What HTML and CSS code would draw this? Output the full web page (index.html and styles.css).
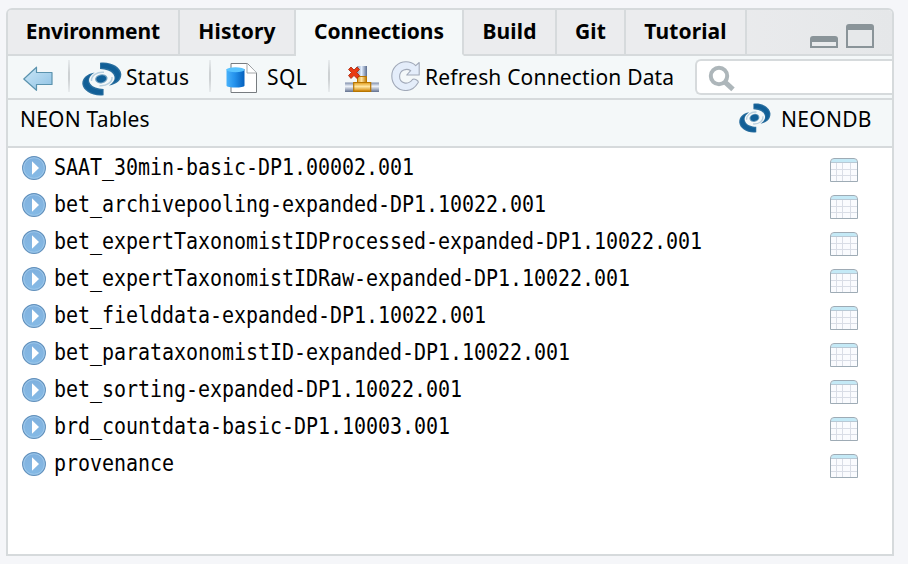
FILE: index.html
```
<!DOCTYPE html>
<html lang="en">
<head>
<meta charset="utf-8">
<title>Connections</title>
<link rel="stylesheet" href="styles.css">
</head>
<body>
<svg class="defs" aria-hidden="true">
  <defs>
    <linearGradient id="playfill" x1="0" y1="0" x2="0" y2="1"><stop offset="0" stop-color="#7db0df"/><stop offset=".35" stop-color="#83b4e0"/><stop offset="1" stop-color="#84bae6"/></linearGradient>
    <linearGradient id="arrowfill" x1="0" y1="0" x2="1" y2="1"><stop offset="0" stop-color="#cbe7f7"/><stop offset="1" stop-color="#8fc2e4"/></linearGradient>
    <linearGradient id="dbfill"><stop offset="0" stop-color="#48b2fb"/><stop offset=".45" stop-color="#2492ec"/><stop offset="1" stop-color="#0560bd"/></linearGradient>
    <linearGradient id="pipe" x1="0" y1="0" x2="0" y2="1"><stop offset="0" stop-color="#7c8ba8"/><stop offset=".4" stop-color="#eff4fb"/><stop offset="1" stop-color="#61708e"/></linearGradient>
    <linearGradient id="vpipe"><stop offset="0" stop-color="#8896ae"/><stop offset=".45" stop-color="#e3efff"/><stop offset="1" stop-color="#596b8d"/></linearGradient>
    <linearGradient id="gold" x1="0" y1="0" x2="0" y2="1"><stop offset="0" stop-color="#e09a16"/><stop offset=".45" stop-color="#ffe6a0"/><stop offset="1" stop-color="#cf8200"/></linearGradient>
    <linearGradient id="vgold"><stop offset="0" stop-color="#d99827"/><stop offset=".45" stop-color="#ffe3a0"/><stop offset="1" stop-color="#bd7800"/></linearGradient>
    <symbol id="play" viewBox="0 0 24 24">
      <circle cx="12" cy="12" r="11.4" fill="url(#playfill)" stroke="#6290bb" stroke-width="1.1"/>
      <circle cx="12" cy="12" r="10.3" fill="none" stroke="#a4cbeb" stroke-width=".8"/>
      <path d="M10 5.200 17 12 10 18.800Z" fill="#fff"/>
    </symbol>
    <symbol id="table" viewBox="0 0 28 24">
      <path d="M.5 23.500V4Q.5 .5 4 .5H24Q27.500 .5 27.500 4V23.500Z" fill="#fafbfe"/>
      <path d="M1 4Q1.500 1 4 1H24Q26.500 1 27 4Z" fill="#c4e9f6"/>
      <path d="M1 11.500H27M1 17.500H27M6.500 5V23M12.500 5V23M20.500 5V23" stroke="#d9dde6" fill="none"/>
      <path d="M1 4.500H27" stroke="#b9c9d5"/>
      <path d="M.5 23.500V4Q.5 .5 4 .5H24Q27.500 .5 27.500 4V23.500Z" fill="none" stroke="#9eabb5"/>
    </symbol>
    <symbol id="swirl" viewBox="0 0 40 34">
      <g id="comma">
        <path d="M18 .8C29 -.5 38.500 5 39.300 12 39.500 18 35 22 27 23.500 32 20 34 16.500 31.500 12.500 29 8.500 24 7.500 18 7Z" fill="#2a6f9f"/>
        <path d="M19 1.500C28 1 37 6 38 12 38 16 36 19 31 21.500 34 18 34.500 14.500 32.500 11.500 30 7.500 25 6 19 5.800Z" fill="#115f97"/>
      </g>
      <use href="#comma" transform="rotate(180 19.800 17)"/>
      <path d="M9.500 19C9 14 15 9.500 22 10.300M30 15C30.500 20 25 24.300 17.500 23.700" fill="none" stroke="#b9d0df" stroke-width="1.500"/>
      <ellipse cx="19.300" cy="16.800" rx="6.300" ry="4.500" fill="#6f9fbf" transform="rotate(-12 19.300 16.800)"/>
      <ellipse cx="19.300" cy="16.800" rx="5" ry="3.500" fill="#115f97" transform="rotate(-12 19.300 16.800)"/>
    </symbol>
  </defs>
</svg>
<div class="pane">
  <div class="tabs">
    <div class="tab t-env"><span>Environment</span></div>
    <div class="tab t-his"><span>History</span></div>
    <div class="tab t-con active"><span>Connections</span></div>
    <div class="tab t-bui"><span>Build</span></div>
    <div class="tab t-git"><span>Git</span></div>
    <div class="tab t-tut"><span>Tutorial</span></div>
    <div class="window-buttons">
      <svg width="28" height="12" viewBox="0 0 28 12"><path d="M0 12V3Q0 0 3 0H25Q28 0 28 3V12Z" fill="#8a9499"/><path d="M2 6H26V10H2Z" fill="#e9ebed"/></svg>
      <svg width="28" height="24" viewBox="0 0 28 24"><path d="M0 24V3Q0 0 3 0H25Q28 0 28 3V24Z" fill="#8a9499"/><path d="M2 6H26V22H2Z" fill="#e6e8ea"/></svg>
    </div>
  </div>
  <div class="toolbar">
    <svg class="back" width="30" height="26" viewBox="0 0 30 26"><path d="M.8 13 13.500 1.200V6.500H29V18.500H13.500V24.300Z" fill="url(#arrowfill)" stroke="#5b93ae" stroke-width="1.200" stroke-linejoin="round"/></svg>
    <i class="sep"></i>
    <svg class="status-icon" width="40" height="34"><use href="#swirl"/></svg>
    <span class="label l-status">Status</span>
    <i class="sep"></i>
    <svg class="sql-icon" width="32" height="30" viewBox="0 0 32 30"><path d="M5 .5H21.500L30.500 10V29.500H5Z" fill="#fff" stroke="#777c80"/><path d="M21 .5V10H30.500" fill="#fff" stroke="#a5a8aa"/><path d="M.5 6V22.500C.5 25.300 18.500 25.300 18.500 22.500V6Z" fill="url(#dbfill)"/><ellipse cx="9.500" cy="6.700" rx="9" ry="2.500" fill="#59c4ff"/></svg>
    <span class="label l-sql">SQL</span>
    <i class="sep"></i>
    <svg class="pipe-icon" width="34" height="26" viewBox="0 0 34 26"><path d="M12 0H22V12H12Z" fill="url(#vpipe)"/><path d="M0 16.500H34V26H0Z" fill="url(#pipe)"/><path d="M12.500 10.500H21.500V17H12.500Z" fill="url(#vgold)" stroke="#bd7700"/><path d="M8.700 16.500H25.700V25.400H8.700Z" fill="url(#gold)" stroke="#b67500" stroke-width="1.200"/><path d="M3.500 3.500 6 1 9 4 12 1 14.500 3.500 11.500 6.500 14.500 9.500 12 12.500 9 9.500 6 12.500 3.500 9.500 6.500 6.500Z" fill="#e93a14" stroke="#a62408" stroke-width=".8"/></svg>
    <svg class="refresh-icon" width="30" height="30" viewBox="0 0 30 30"><path d="M28.200 1.500V14H15.700L19.700 9.700C16 7 8.600 8.500 8.600 15.500 8.600 22.500 17 24.500 21.500 18.500 23 17 28 19.500 27.200 21.500 24 27 20 29.500 15 29.500 6 29.500 .8 22.500 .8 15 .8 7 7 .8 15 .8 19 .8 22 2 24.700 4.700Z" fill="#e4edfa" stroke="#a1a9b8" stroke-width="1.100" stroke-linejoin="round"/></svg>
    <span class="label l-refresh">Refresh Connection Data</span>
    <div class="search"><svg width="28" height="28" viewBox="0 0 28 28"><circle cx="11" cy="11" r="8.200" fill="none" stroke="#adb6ba" stroke-width="4"/><path d="M17.300 17.300 25 24.300" stroke="#adb6ba" stroke-width="5" fill="none"/></svg></div>
  </div>
  <div class="header">
    <span class="label l-tables">NEON Tables</span>
    <svg class="db-icon" width="32" height="30" viewBox="0 0 40 34" preserveAspectRatio="none"><use href="#swirl" width="40" height="34"/></svg>
    <span class="label l-db">NEONDB</span>
  </div>
  <div class="list">
    <div class="row"><svg width="24" height="24"><use href="#play"/></svg><span>SAAT_30min-basic-DP1.00002.001</span><svg class="grid" width="28" height="24"><use href="#table"/></svg></div>
    <div class="row"><svg width="24" height="24"><use href="#play"/></svg><span>bet_archivepooling-expanded-DP1.10022.001</span><svg class="grid" width="28" height="24"><use href="#table"/></svg></div>
    <div class="row"><svg width="24" height="24"><use href="#play"/></svg><span>bet_expertTaxonomistIDProcessed-expanded-DP1.10022.001</span><svg class="grid" width="28" height="24"><use href="#table"/></svg></div>
    <div class="row"><svg width="24" height="24"><use href="#play"/></svg><span>bet_expertTaxonomistIDRaw-expanded-DP1.10022.001</span><svg class="grid" width="28" height="24"><use href="#table"/></svg></div>
    <div class="row"><svg width="24" height="24"><use href="#play"/></svg><span>bet_fielddata-expanded-DP1.10022.001</span><svg class="grid" width="28" height="24"><use href="#table"/></svg></div>
    <div class="row"><svg width="24" height="24"><use href="#play"/></svg><span>bet_parataxonomistID-expanded-DP1.10022.001</span><svg class="grid" width="28" height="24"><use href="#table"/></svg></div>
    <div class="row"><svg width="24" height="24"><use href="#play"/></svg><span>bet_sorting-expanded-DP1.10022.001</span><svg class="grid" width="28" height="24"><use href="#table"/></svg></div>
    <div class="row"><svg width="24" height="24"><use href="#play"/></svg><span>brd_countdata-basic-DP1.10003.001</span><svg class="grid" width="28" height="24"><use href="#table"/></svg></div>
    <div class="row"><svg width="24" height="24"><use href="#play"/></svg><span>provenance</span><svg class="grid" width="28" height="24"><use href="#table"/></svg></div>
  </div>
</div>
</body>
</html>
```
FILE: styles.css
```
* { box-sizing: border-box; }
body { margin: 0; height: 564px; padding: 8px 14px 8px 6px; background: #f5f6f9; color: #000; overflow: hidden; font-family: "Noto Sans", sans-serif; }
svg { display: block; flex: none; }
.defs { position: absolute; width: 0; height: 0; }
.pane { width: 888px; height: 548px; border: 2px solid #d6dadc; border-radius: 6px 6px 0 0; background: #fff; overflow: hidden; }
.tabs { display: flex; height: 46px; background: linear-gradient(90deg, #eaebed 80%, #e5e7e9); }
.tab { height: 46px; flex: none; border-right: 2px solid #d6dadc; border-bottom: 2px solid #d6dadc; background: #ebecee; font-size: 21px; font-weight: 700; line-height: 43px; text-align: center; white-space: nowrap; }
.tab.active { background: #f4f8f9; border-bottom-color: #f4f8f9; }
.t-env { width: 172px; letter-spacing: -.08px; }
.t-his { width: 116px; letter-spacing: .12px; }
.t-con { width: 168px; }
.t-bui { width: 93px; letter-spacing: .15px; }
.t-git { width: 69px; letter-spacing: .2px; }
.t-tut { width: 121px; letter-spacing: .12px; }
.window-buttons { flex: 1; display: flex; align-items: flex-end; justify-content: flex-end; gap: 8px; padding: 0 18px 6px 0; border-bottom: 2px solid #d6dadc; }
.toolbar { display: flex; align-items: flex-start; height: 44px; background: #f4f8f9; border-bottom: 2px solid #d6dadc; }
.label { font-size: 21px; line-height: 30px; white-space: nowrap; }
.sep { flex: none; width: 2px; height: 32px; margin-top: 4px; background: linear-gradient(#e8ecee, #cdd1d3 40%, #cdd1d3 60%, #e8ecee); }
.back { margin: 10px 15px 0 15px; }
.status-icon { margin: 6px 0 0 12px; }
.toolbar .label { margin-top: 6px; }
.l-status { width: 87px; padding-left: 4px; letter-spacing: .3px; }
.sql-icon { margin: 7px 0 0 15px; }
.l-sql { width: 70px; padding-left: 9px; letter-spacing: .4px; }
.pipe-icon { margin: 10px 0 0 15px; }
.refresh-icon { margin: 5px 0 0 12px; }
.l-refresh { width: 274px; padding-left: 4px; letter-spacing: .18px; }
.search { flex: 1; height: 36px; margin-top: 3px; padding: 4px 11px; border: 2px solid #d6dadc; border-right: 0; border-radius: 6px 0 0 6px; background: #fff; }
.header { display: flex; height: 48px; padding: 3px 0 0 12px; background: #f4f8f9; border-bottom: 2px solid #d6dadc; }
.header .label { margin-top: 1px; }
.l-tables { width: 719px; letter-spacing: .22px; }
.l-db { margin-left: 10px; letter-spacing: .3px; }
.row { display: flex; height: 37px; padding: 8px 34px 0 14px; }
.row span { flex: 1; margin: -1px 0 0 8px; height: 24px; font: 20px/24px "DejaVu Sans Mono", monospace; letter-spacing: -.041px; white-space: nowrap; transform: scaleY(1.12); }
.grid { margin-top: 2px; }
```
